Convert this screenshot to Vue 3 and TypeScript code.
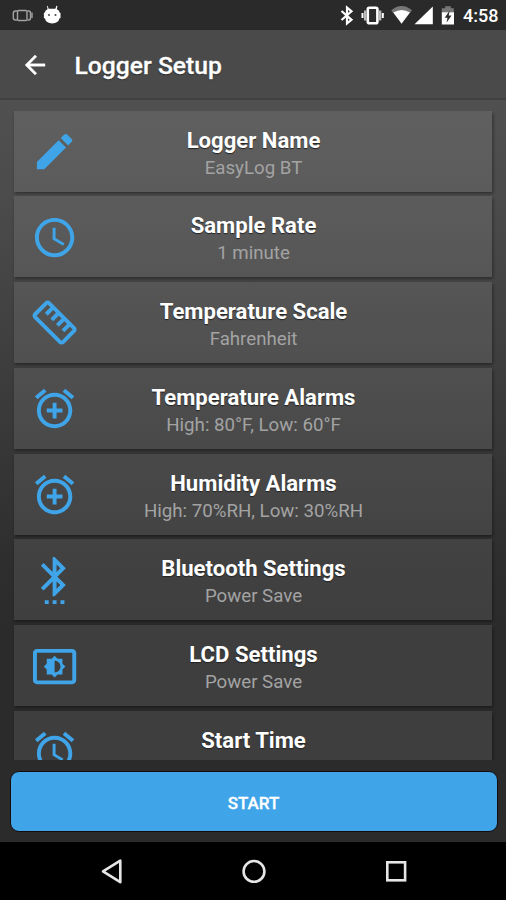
<script setup lang="ts">
interface Setting {
  title: string
  value: string
  icon: string
  rotated?: boolean
}

const bells =
  'M7.88 3.39L6.6 1.86 2 5.71l1.29 1.53 4.59-3.85zM22 5.72l-4.6-3.86-1.29 1.53 4.6 3.86L22 5.72zM12 4c-4.97 0-9 4.03-9 9s4.02 9 9 9c4.97 0 9-4.03 9-9s-4.03-9-9-9zm0 16c-3.87 0-7-3.13-7-7s3.13-7 7-7 7 3.13 7 7-3.13 7-7 7z'
const alarmAdd = bells + 'M13 9h-2v3H8v2h3v3h2v-3h3v-2h-3V9z'

const settings: Setting[] = [
  {
    title: 'Logger Name',
    value: 'EasyLog BT',
    icon: 'M3 17.25V21h3.75L17.81 9.94l-3.75-3.75L3 17.25zM20.71 7.04c.39-.39.39-1.02 0-1.41l-2.34-2.34c-.39-.39-1.02-.39-1.41 0l-1.83 1.83 3.75 3.75 1.83-1.83z',
  },
  {
    title: 'Sample Rate',
    value: '1 minute',
    icon: 'M11.99 2C6.47 2 2 6.48 2 12s4.47 10 9.99 10C17.52 22 22 17.52 22 12S17.52 2 11.99 2zM12 20c-4.42 0-8-3.58-8-8s3.58-8 8-8 8 3.58 8 8-3.58 8-8 8zM12.5 7H11v6l5.25 3.15.75-1.23-4.5-2.67V7z',
  },
  {
    title: 'Temperature Scale',
    value: 'Fahrenheit',
    icon: 'M21 6H3c-1.1 0-2 .9-2 2v8c0 1.1.9 2 2 2h18c1.1 0 2-.9 2-2V8c0-1.1-.9-2-2-2zm0 10H3V8h2v4h2V8h2v4h2V8h2v4h2V8h2v4h2V8h2v8z',
    rotated: true,
  },
  { title: 'Temperature Alarms', value: 'High: 80°F, Low: 60°F', icon: alarmAdd },
  { title: 'Humidity Alarms', value: 'High: 70%RH, Low: 30%RH', icon: alarmAdd },
  {
    title: 'Bluetooth Settings',
    value: 'Power Save',
    icon: 'M11 24h2v-2h-2v2zm-4 0h2v-2H7v2zm8 0h2v-2h-2v2zm2.71-18.29L12 0h-1v7.59L6.41 3 5 4.41 10.59 10 5 15.59 6.41 17 11 12.41V20h1l5.71-5.71-4.3-4.29 4.3-4.29zM13 3.83l1.88 1.88L13 7.59V3.83zm1.88 10.46L13 16.17v-3.76l1.88 1.88z',
  },
  {
    title: 'LCD Settings',
    value: 'Power Save',
    icon: 'M21 3H3c-1.1 0-2 .9-2 2v14c0 1.1.9 2 2 2h18c1.1 0 2-.9 2-2V5c0-1.1-.9-2-2-2zm0 16.01H3V4.99h18v14.02zM8 16h2.5l1.5 1.5 1.5-1.5H16v-2.5l1.5-1.5-1.5-1.5V8h-2.5L12 6.5 10.5 8H8v2.5L6.5 12 8 13.5V16zm4-7c1.66 0 3 1.34 3 3s-1.34 3-3 3V9z',
  },
  { title: 'Start Time', value: '', icon: bells + 'M12.5 8H11v6l4.75 2.85.75-1.23-4-2.37V8z' },
]
</script>

<template>
  <div class="screen">
    <div class="status-bar">
      <svg class="status-left" viewBox="0 0 64 30">
        <g fill="none" stroke="#a2a2a2" stroke-width="1.4">
          <rect x="17.5" y="10.5" width="9.5" height="10" rx="1" />
          <path d="M17 11h-1.5q-2.2 0-2.2 2.2v4.600q0 2.200 2.200 2.200H17M27.500 11h1.200q1.800 0 1.800 2v5q0 2-1.800 2h-1.200" />
          <path d="M32 12.500v5.500" />
        </g>
        <path fill="#fff" d="M47.600 5.700l1 3h6.800l1-3 1 .3-.6 3.200q2.500 1 2.800 3.300l.9.5v5l-1.100.6q-.9 4.700-7.200 4.800-6.300-.1-7.200-4.800l-1.100-.6v-5l.9-.5q.3-2.300 2.800-3.300l-.6-3.200z" />
        <circle cx="49" cy="15" r="1" fill="#444" />
        <circle cx="55.500" cy="15" r="1" fill="#444" />
      </svg>
      <svg class="status-right" viewBox="336 0 124 30">
        <path fill="none" stroke="#fff" stroke-width="2.200" d="M341.500 11l10 8.800-4.500 3.700V7.500l4.500 3.800-10 8.700" />
        <rect x="367.800" y="7.800" width="9.600" height="15.400" rx="1.500" fill="none" stroke="#fff" stroke-width="2.600" />
        <path fill="#bbb" d="M364 10.500h2.500v10H364zM378.800 10.500h2.500v10h-2.500z" />
        <path fill="#fff" d="M361.500 13h2v5h-2zM381.800 13h2v5h-2z" />
        <path fill="#777" d="M391.200 10.300q10.300-8.600 20.800 0l-2 2.700q-8.500-5-16.800 0z" />
        <path fill="#fff" d="M393.200 12.600q8.400-5 16.800 0l-8.400 11.200z" />
        <path fill="#fff" d="M432.800 6.500v17.700h-18.300z" />
        <path fill="#777" d="M445.200 6.200h5.600v2h3v5h-12v-5h3.400z" />
        <path fill="#fff" d="M441.800 12.300h12.200V24.500h-12.200z" />
        <path fill="#2b2b2b" d="M449.700 10.500l-5 7.300h2.800l-1 5 5-7.300h-2.800z" />
      </svg>
      <span class="clock">4:58</span>
    </div>

    <header class="app-bar">
      <svg class="back" viewBox="0 0 24 24">
        <path d="M20 11H7.830l5.590-5.590L12 4l-8 8 8 8 1.410-1.410L7.830 13H20v-2z" />
      </svg>
      <h1>Logger Setup</h1>
    </header>

    <main class="list">
      <section v-for="item in settings" :key="item.title" class="card">
        <svg class="icon" :class="{ rotated: item.rotated }" viewBox="0 0 24 24">
          <path :d="item.icon" />
        </svg>
        <div class="text">
          <h2>{{ item.title }}</h2>
          <p>{{ item.value }}</p>
        </div>
      </section>
    </main>

    <div class="footer">
      <button class="start" type="button">START</button>
    </div>

    <nav class="nav-bar">
      <svg viewBox="0 0 506 58" fill="none" stroke="#e6e6e6" stroke-width="2.600">
        <path d="M120.300 18.600v21.600L103 29.400z" stroke-linejoin="round" />
        <circle cx="254" cy="29.400" r="10.400" />
        <rect x="387.300" y="20.300" width="17.800" height="18" />
      </svg>
    </nav>
  </div>
</template>

<style>
body {
  background: #000;
  overflow: hidden;
}
</style>

<style scoped>
.screen {
  display: flex;
  flex-direction: column;
  width: 506px;
  height: 900px;
  overflow: hidden;
  font-family: Roboto, sans-serif;
  color: #fff;
  background: linear-gradient(#505050 100px, #4b4b4b 200px, #2e2e2e 560px, #2b2b2b 640px);
}

.status-bar {
  display: flex;
  flex: 0 0 30px;
  height: 30px;
  min-height: 0;
  background: #2a2a2a;
}

.status-left {
  width: 64px;
  height: 30px;
}

.status-right {
  width: 124px;
  height: 30px;
  margin-left: 272px;
}

.clock {
  height: 30px;
  margin-left: 3px;
  font-size: 18px;
  font-weight: 500;
  line-height: 32px;
}

.app-bar {
  display: flex;
  flex: 0 0 70px;
  align-items: center;
  box-sizing: border-box;
  padding-left: 20px;
  background: #4a4a4a;
  border-bottom: 2px solid #414141;
}

.back {
  width: 30px;
  height: 30px;
  margin-top: 1px;
  fill: #fff;
  stroke: #fff;
  stroke-width: 0.3;
}

h1 {
  margin: 4px 0 0 24.500px;
  font-size: 24.700px;
  font-weight: 500;
  line-height: 30px;
  text-shadow: 0 1px 1px #222;
  -webkit-text-stroke: 0.3px #fff;
}

.list {
  display: flex;
  flex: 0 0 660px;
  flex-direction: column;
  gap: 4.800px;
  box-sizing: border-box;
  padding: 10.500px 14.300px 0;
  overflow: hidden;
}

.card {
  position: relative;
  display: flex;
  flex: 0 0 81px;
  align-items: center;
  justify-content: center;
  background: rgba(255, 255, 255, 0.095);
  box-shadow: 1px 1.500px 3px 0 rgba(0, 0, 0, 0.4);
}

.icon {
  position: absolute;
  left: 16.600px;
  top: 17.400px;
  width: 47.200px;
  height: 47.200px;
  fill: #3fa4e8;
}

.rotated {
  transform: rotate(45deg);
}

.text {
  padding: 6px 0 0 1px;
  text-align: center;
}

h2 {
  margin: 0;
  font-size: 22.100px;
  font-weight: 700;
  line-height: 27px;
  text-shadow: 0 1px 1px #222;
}

p {
  height: 28px;
  margin: 0;
  font-size: 18.700px;
  line-height: 28px;
  color: #a3a3a3;
}

.footer {
  flex: 0 0 82px;
  box-sizing: border-box;
  padding: 11px 8.500px 9px 9.500px;
}

.start {
  display: block;
  width: 100%;
  height: 61px;
  padding: 2px 0 0;
  border: 1px solid #150c0c;
  border-radius: 9px;
  color: #fff;
  background: #3fa4e8;
  font-family: inherit;
  font-size: 17px;
  font-weight: 500;
  -webkit-text-stroke: 0.3px #fff;
}

.nav-bar {
  flex: 1;
  background: #000;
}

.nav-bar svg {
  display: block;
  width: 506px;
  height: 58px;
}
</style>
